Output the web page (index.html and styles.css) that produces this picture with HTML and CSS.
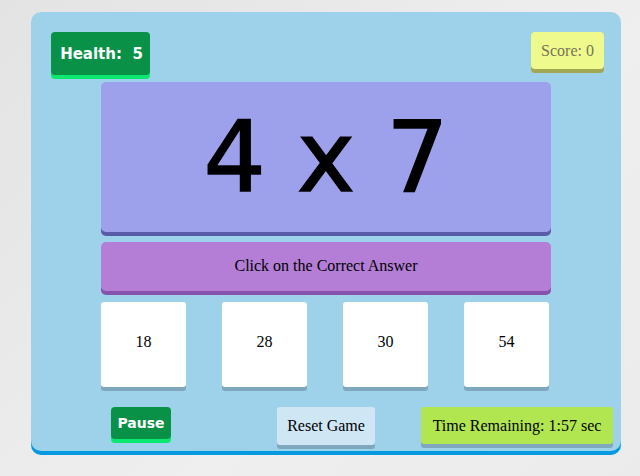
FILE: index.html
```html
<!DOCTYPE html>
<html lang="en">
<head>
<meta charset="utf-8">
<title>Multiplication Game</title>
<link rel="stylesheet" href="styles.css">
</head>
<body>
<div class="game">
  <div class="top-row">
    <div class="health">Health:&nbsp; 5</div>
    <div class="score">Score: 0</div>
  </div>
  <div class="problem">4 x 7</div>
  <div class="instruction">Click on the Correct Answer</div>
  <div class="answers">
    <div class="answer">18</div>
    <div class="answer">28</div>
    <div class="answer">30</div>
    <div class="answer">54</div>
  </div>
  <div class="bottom-row">
    <div class="pause">Pause</div>
    <div class="reset">Reset Game</div>
    <div class="timer">Time Remaining: 1:57 sec</div>
  </div>
</div>
</body>
</html>
```
FILE: styles.css
```css
html, body {
  margin: 0;
  padding: 0;
}
body {
  width: 640px;
  height: 476px;
  overflow: hidden;
  background: linear-gradient(135deg, #e3e3e3 0%, #efefef 60%, #ebebeb 100%);
  font-family: "Liberation Serif", "Times New Roman", serif;
  font-size: 16px;
  color: #000;
}
.game {
  box-sizing: border-box;
  margin: 12px 0 0 31px;
  width: 590px;
  height: 439px;
  background: #9dd2ea;
  border-radius: 10px;
  box-shadow: 0 4px 0 #0499e0;
  padding-top: 20px;
}
.top-row {
  display: flex;
  justify-content: space-between;
  align-items: flex-start;
  padding: 0 17px 0 20px;
  height: 47px;
}
.health {
  box-sizing: border-box;
  width: 99px;
  height: 43px;
  background: #0a9148;
  box-shadow: 0 4px 0 #0ae870;
  border-radius: 4px;
  color: #fff;
  font-family: "Comic Sans MS", "DejaVu Sans", sans-serif;
  font-weight: bold;
  font-size: 15px;
  display: flex;
  align-items: center;
  justify-content: center;
  white-space: nowrap;
  padding-left: 2px;
}
.score {
  box-sizing: border-box;
  width: 73px;
  height: 37px;
  background: #eefa8b;
  box-shadow: 0 4px 0 #a1a753;
  border-radius: 4px;
  color: #74745a;
  display: flex;
  align-items: center;
  justify-content: center;
  white-space: nowrap;
}
.problem {
  margin: 3px 0 0 70px;
  width: 450px;
  height: 150px;
  background: #9da1eb;
  box-shadow: 0 4px 0 #5a5ca9;
  border-radius: 5px;
  font-family: "Comic Sans MS", "DejaVu Sans", sans-serif;
  font-size: 98px;
  -webkit-text-stroke: 1.5px #000;
  display: flex;
  align-items: center;
  justify-content: center;
  color: #000;
}
.instruction {
  margin: 10px 0 0 70px;
  width: 450px;
  height: 49px;
  background: #b47ed6;
  box-shadow: 0 4px 0 #8652ae;
  border-radius: 5px;
  display: flex;
  align-items: center;
  justify-content: center;
  padding-bottom: 2px;
  box-sizing: border-box;
}
.answers {
  display: flex;
  gap: 36px;
  margin: 11px 0 0 70px;
}
.answer {
  width: 85px;
  height: 85px;
  background: #fff;
  box-shadow: 0 4px 0 #7fa8be;
  border-radius: 3px;
  display: flex;
  align-items: center;
  justify-content: center;
  padding-bottom: 6px;
  box-sizing: border-box;
}
.bottom-row {
  display: flex;
  align-items: flex-start;
  margin: 20px 0 0 80px;
}
.pause {
  width: 60px;
  height: 32px;
  background: #0a9148;
  box-shadow: 0 4px 0 #0ae870;
  border-radius: 4px;
  color: #fff;
  font-family: "Comic Sans MS", "DejaVu Sans", sans-serif;
  font-weight: bold;
  font-size: 14px;
  display: flex;
  align-items: center;
  justify-content: center;
}
.reset {
  margin-left: 106px;
  width: 98px;
  height: 38px;
  background: #cfe6f5;
  box-shadow: 0 4px 0 #7fa8be;
  border-radius: 3px;
  display: flex;
  align-items: center;
  justify-content: center;
  white-space: nowrap;
}
.timer {
  margin-left: 46px;
  width: 192px;
  height: 37px;
  background: #b1e651;
  box-shadow: 0 4px 0 #7fa8be;
  border-radius: 3px;
  display: flex;
  align-items: center;
  justify-content: center;
  white-space: nowrap;
}
```
